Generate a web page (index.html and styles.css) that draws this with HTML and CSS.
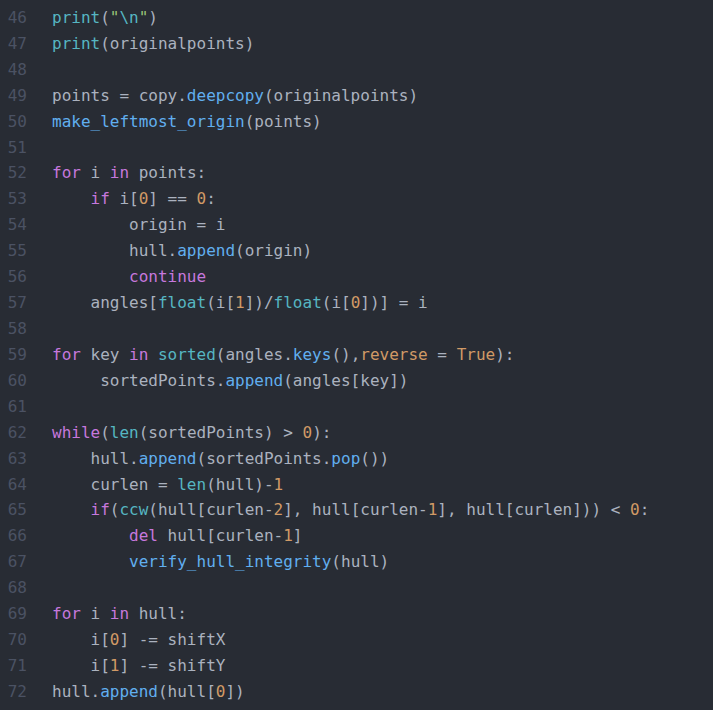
FILE: index.html
```html
<!DOCTYPE html>
<html>
<head>
<meta charset="utf-8">
<link rel="stylesheet" href="styles.css">
</head>
<body>
<div class="editor">
<div class="gutter"><div>45</div><div>46</div><div>47</div><div>48</div><div>49</div><div>50</div><div>51</div><div>52</div><div>53</div><div>54</div><div>55</div><div>56</div><div>57</div><div>58</div><div>59</div><div>60</div><div>61</div><div>62</div><div>63</div><div>64</div><div>65</div><div>66</div><div>67</div><div>68</div><div>69</div><div>70</div><div>71</div><div>72</div><div>73</div></div>
<pre class="code"><span class="b">print</span>(<span class="s">"Original points (after leftmost shifted to origin):"</span>)
<span class="b">print</span>(<span class="s">"</span><span class="b">\n</span><span class="s">"</span>)
<span class="b">print</span>(originalpoints)

points = copy.<span class="f">deepcopy</span>(originalpoints)
<span class="f">make_leftmost_origin</span>(points)

<span class="k">for</span> i <span class="k">in</span> points:
    <span class="k">if</span> i[<span class="n">0</span>] == <span class="n">0</span>:
        origin = i
        hull.<span class="f">append</span>(origin)
        <span class="k">continue</span>
    angles[<span class="b">float</span>(i[<span class="n">1</span>])/<span class="b">float</span>(i[<span class="n">0</span>])] = i

<span class="k">for</span> key <span class="k">in</span> <span class="b">sorted</span>(angles.<span class="f">keys</span>(),<span class="n">reverse</span> = <span class="n">True</span>):
     sortedPoints.<span class="f">append</span>(angles[key])

<span class="k">while</span>(<span class="b">len</span>(sortedPoints) &gt; <span class="n">0</span>):
    hull.<span class="f">append</span>(sortedPoints.<span class="f">pop</span>())
    curlen = <span class="b">len</span>(hull)-<span class="n">1</span>
    <span class="k">if</span>(<span class="b">ccw</span>(hull[curlen-<span class="n">2</span>], hull[curlen-<span class="n">1</span>], hull[curlen])) &lt; <span class="n">0</span>:
        <span class="k">del</span> hull[curlen-<span class="n">1</span>]
        <span class="f">verify_hull_integrity</span>(hull)

<span class="k">for</span> i <span class="k">in</span> hull:
    i[<span class="n">0</span>] -= shiftX
    i[<span class="n">1</span>] -= shiftY
hull.<span class="f">append</span>(hull[<span class="n">0</span>])
</pre>
</div>
</body>
</html>
```

FILE: styles.css
```css
html, body {
  margin: 0;
  padding: 0;
  background: #282c34;
  overflow: hidden;
  height: 100%;
}
.editor {
  display: flex;
  margin-top: -21px;
  font-family: "DejaVu Sans Mono", "Liberation Mono", monospace;
  font-size: 16px;
  line-height: 25.92px;
  color: #abb2bf;
}
.gutter {
  width: 27px;
  text-align: right;
  color: #4b5263;
  padding-right: 25px;
  flex: none;
}
.code {
  margin: 0;
  font: inherit;
  white-space: pre;
}
.k { color: #c678dd; }
.b { color: #56b6c2; }
.f { color: #61afef; }
.n { color: #d19a66; }
.s { color: #98c379; }
```
